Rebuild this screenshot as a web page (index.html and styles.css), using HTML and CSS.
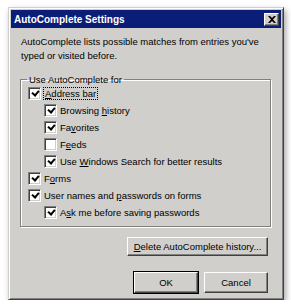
FILE: index.html
```html
<!DOCTYPE html>
<html lang="en">
<head>
    <meta charset="UTF-8">
    <title>AutoComplete Settings</title>
    <link rel="stylesheet" href="styles.css">
</head>
<body>

    <!-- DIALOG WINDOW -->
    <div class="dialog">
        <div class="titlebar">
            <span class="title">AutoComplete Settings</span>
            <span class="close-btn">
                <svg width="8" height="7" viewBox="0 0 8 7">
                    <path d="M0 0h2l2 2 2-2h2L5 3.5 8 7H6L4 5 2 7H0l3-3.5z" fill="#000"/>
                </svg>
            </span>
        </div>

        <div class="content">
            <p class="intro">AutoComplete lists possible matches from entries you've typed or visited before.</p>

            <fieldset class="group">
                <legend>Use AutoComplete for</legend>
                <div class="row"><span class="check on"></span><span class="label focus"><u>A</u>ddress bar</span></div>
                <div class="row sub"><span class="check on"></span><span class="label">Browsing <u>h</u>istory</span></div>
                <div class="row sub"><span class="check on"></span><span class="label">Fa<u>v</u>orites</span></div>
                <div class="row sub"><span class="check"></span><span class="label">F<u>e</u>eds</span></div>
                <div class="row sub"><span class="check on"></span><span class="label">Use <u>W</u>indows Search for better results</span></div>
                <div class="row"><span class="check on"></span><span class="label">F<u>o</u>rms</span></div>
                <div class="row"><span class="check on"></span><span class="label">User names and <u>p</u>asswords on forms</span></div>
                <div class="row sub"><span class="check on"></span><span class="label">A<u>s</u>k me before saving passwords</span></div>
            </fieldset>

            <div class="btn-line">
                <button class="btn wide"><u>D</u>elete AutoComplete history...</button>
            </div>
            <div class="btn-line bottom">
                <button class="btn default">OK</button>
                <button class="btn">Cancel</button>
            </div>
        </div>
    </div>

</body>
</html>
```

FILE: styles.css
```css
* { margin: 0; padding: 0; box-sizing: border-box; }
body {
    background: #fff;
    font-family: "Liberation Sans", Arial, sans-serif;
    font-size: 9.5px;
    color: #000;
}

.dialog {
    width: 276px;
    height: 293px;
    margin: 7px 0 0 8px;
    background: #d0cfcb;
    border: 1px solid;
    border-color: #d0cfcb #404040 #404040 #d0cfcb;
    box-shadow: inset 1px 1px 0 #fff, inset -1px -1px 0 #808080, 2px 3px 6px rgba(0, 0, 0, 0.35);
    padding: 2px;
}

.titlebar {
    height: 18px;
    background: #0a1e78;
    display: flex;
    align-items: center;
    justify-content: space-between;
    padding: 0 2px 0 3px;
}

.title {
    color: #fff;
    font-weight: bold;
    font-size: 10px;
}

.close-btn {
    width: 15px;
    height: 13px;
    background: #d0cfcb;
    border: 1px solid;
    border-color: #fff #404040 #404040 #fff;
    box-shadow: inset -1px -1px 0 #808080;
    display: flex;
    align-items: center;
    justify-content: center;
}

.content {
    padding: 7px 10px 0 9px;
}

.intro {
    line-height: 14px;
    padding-left: 1px;
}

.group {
    margin-top: 11px;
    border: 1px solid #808080;
    box-shadow: 1px 1px 0 #fff, inset 1px 1px 0 #fff;
    padding: 0 6px 5px 7px;
}

.group legend {
    padding: 0 2px;
    margin-left: -1px;
}

.row {
    height: 17px;
    display: flex;
    align-items: center;
    gap: 3px;
}

.row.sub {
    padding-left: 16px;
}

.check {
    flex: none;
    width: 13px;
    height: 13px;
    background: #fff;
    border: 1px solid;
    border-color: #808080 #fff #fff #808080;
    box-shadow: inset 1px 1px 0 #404040, inset -1px -1px 0 #d0cfcb;
    position: relative;
}

.check.on::after {
    content: "";
    position: absolute;
    left: 3px;
    top: 2px;
    width: 5px;
    height: 3px;
    border-left: 2px solid #000;
    border-bottom: 2px solid #000;
    transform: rotate(-50deg);
}

.label {
    white-space: nowrap;
}

.focus {
    outline: 1px dotted #000;
    padding: 0 1px;
}

.btn-line {
    display: flex;
    justify-content: flex-end;
    gap: 6px;
    margin-top: 10px;
    padding-right: 3px;
}

.btn-line.bottom {
    margin-top: 16px;
}

.btn {
    font-family: inherit;
    font-size: 9.5px;
    height: 21px;
    width: 64px;
    background: #d0cfcb;
    border: 1px solid;
    border-color: #fff #404040 #404040 #fff;
    box-shadow: inset -1px -1px 0 #808080;
}

.btn.wide {
    width: 141px;
    height: 19px;
}

.btn.default {
    outline: 1px solid #000;
    outline-offset: 0;
}
```
